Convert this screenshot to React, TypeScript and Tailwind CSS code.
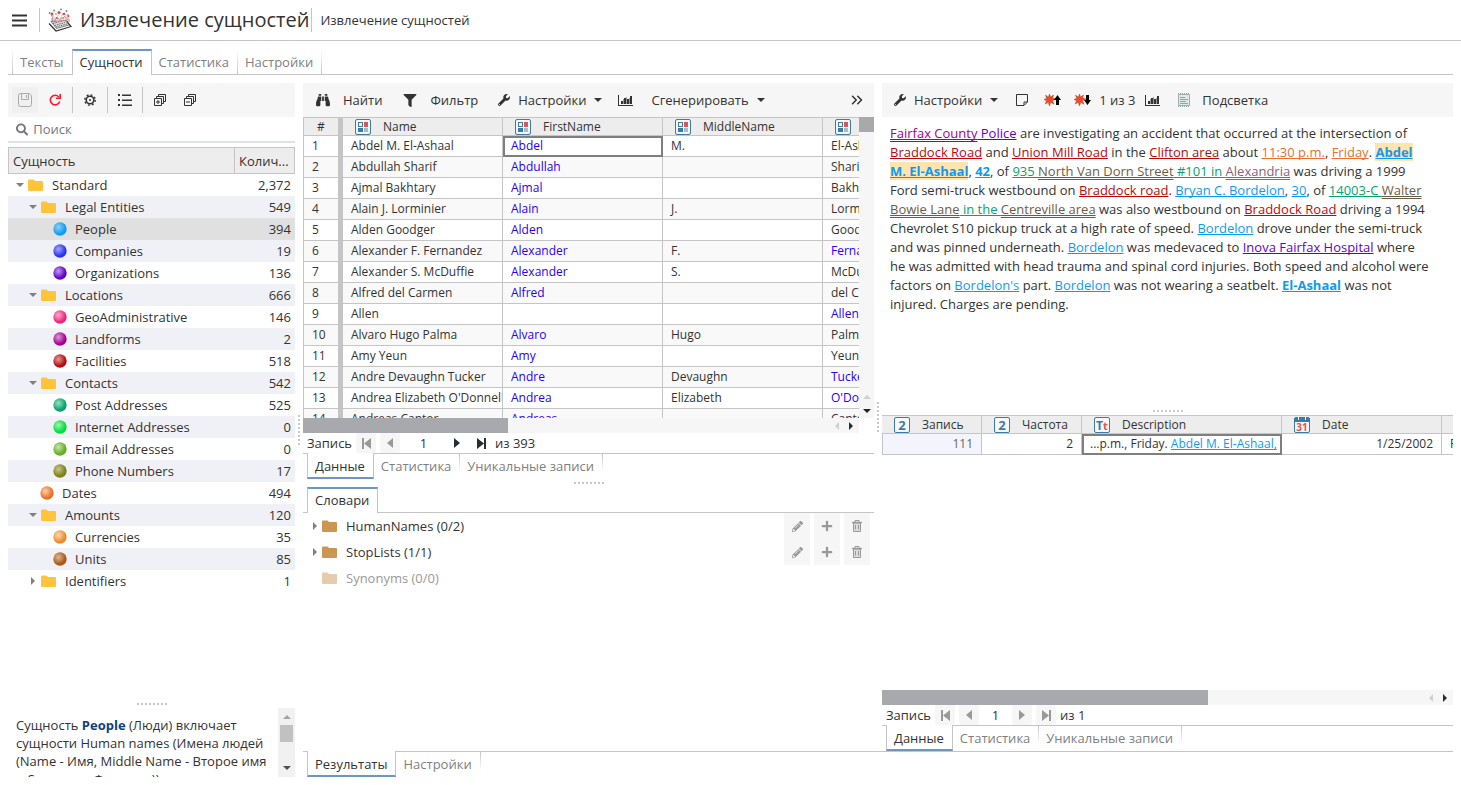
import React, { useId, useState } from 'react';
import { FaBinoculars, FaFilter, FaWrench, FaSearch, FaPencilAlt, FaPlus } from 'react-icons/fa';
import { ChevronsRight } from 'lucide-react';

type Ball = [string, string];

interface TreeNode {
  level: 0 | 1 | 2;
  label: string;
  count: string;
  ball?: Ball;
  closed?: boolean;
}

const tree: TreeNode[] = [
  { level: 0, label: 'Standard', count: '2,372' },
  { level: 1, label: 'Legal Entities', count: '549' },
  { level: 2, label: 'People', count: '394', ball: ['#8fd0f5', '#109cf0'] },
  { level: 2, label: 'Companies', count: '19', ball: ['#a3a8ff', '#2a33f0'] },
  { level: 2, label: 'Organizations', count: '136', ball: ['#c39bf0', '#6200cc'] },
  { level: 1, label: 'Locations', count: '666' },
  { level: 2, label: 'GeoAdministrative', count: '146', ball: ['#ffb0cf', '#f02378'] },
  { level: 2, label: 'Landforms', count: '2', ball: ['#e09ad6', '#a40090'] },
  { level: 2, label: 'Facilities', count: '518', ball: ['#e59a9a', '#b80a0e'] },
  { level: 1, label: 'Contacts', count: '542' },
  { level: 2, label: 'Post Addresses', count: '525', ball: ['#98dfc4', '#08a26c'] },
  { level: 2, label: 'Internet Addresses', count: '0', ball: ['#9cf7b0', '#04dd3c'] },
  { level: 2, label: 'Email Addresses', count: '0', ball: ['#c5e8a5', '#64ad28'] },
  { level: 2, label: 'Phone Numbers', count: '17', ball: ['#c9c98a', '#7d801c'] },
  { level: 1, label: 'Dates', count: '494', ball: ['#ffd0b0', '#e8702a'] },
  { level: 1, label: 'Amounts', count: '120' },
  { level: 2, label: 'Currencies', count: '35', ball: ['#ffdcb0', '#ea8a2a'] },
  { level: 2, label: 'Units', count: '85', ball: ['#dfb894', '#a8581a'] },
  { level: 1, label: 'Identifiers', count: '1', closed: true },
];

const indent = { 0: 'pl-[6px]', 1: 'pl-[19px]', 2: 'pl-[32px]' };

// last name is shown in blue when the extractor recognised it
const people: [string, string, string, string, boolean][] = [
  ['Abdel M. El-Ashaal', 'Abdel', 'M.', 'El-Ashaal', false],
  ['Abdullah Sharif', 'Abdullah', '', 'Sharif', false],
  ['Ajmal Bakhtary', 'Ajmal', '', 'Bakhtary', false],
  ['Alain J. Lorminier', 'Alain', 'J.', 'Lorminier', false],
  ['Alden Goodger', 'Alden', '', 'Goodger', false],
  ['Alexander F. Fernandez', 'Alexander', 'F.', 'Fernandez', true],
  ['Alexander S. McDuffie', 'Alexander', 'S.', 'McDuffie', false],
  ['Alfred del Carmen', 'Alfred', '', 'del Carmen', false],
  ['Allen', '', '', 'Allen', true],
  ['Alvaro Hugo Palma', 'Alvaro', 'Hugo', 'Palma', false],
  ['Amy Yeun', 'Amy', '', 'Yeun', false],
  ['Andre Devaughn Tucker', 'Andre', 'Devaughn', 'Tucker', true],
  ["Andrea Elizabeth O'Donnell", 'Andrea', 'Elizabeth', "O'Donnell", true],
  ['Andreas Cantor', 'Andreas', '', 'Cantor', false],
];

const dictionaries = [
  { name: 'HumanNames (0/2)', empty: false },
  { name: 'StopLists (1/1)', empty: false },
  { name: 'Synonyms (0/0)', empty: true },
];

function Arrow({ dir, className = '' }: { dir: 'up' | 'down' | 'left' | 'right'; className?: string }) {
  const d = {
    up: 'M0 6 L4 2 L8 6Z',
    down: 'M0 2 L8 2 L4 6Z',
    left: 'M6 0 L6 8 L2 4Z',
    right: 'M2 0 L6 4 L2 8Z',
  };
  return (
    <svg viewBox="0 0 8 8" className={`w-2 h-2 shrink-0 ${className}`} fill="currentColor">
      <path d={d[dir]} />
    </svg>
  );
}

function Folder({ className }: { className: string }) {
  return (
    <svg viewBox="0 0 15 12" className={`h-3 w-[15px] shrink-0 ${className}`} fill="currentColor">
      <path d="M0 1.5Q0 .5 1 .5H5.2Q6 .5 6.4 1.2L7 2H14Q15 2 15 3V11Q15 12 14 12H1Q0 12 0 11Z" />
    </svg>
  );
}

function BallIcon({ id, colors }: { id: string; colors: Ball }) {
  return (
    <svg viewBox="0 0 14 14" className="w-[14px] h-[14px] shrink-0">
      <defs>
        <radialGradient id={id} cx="0.38" cy="0.36" r="0.62">
          <stop offset="0" stopColor={colors[0]} />
          <stop offset="0.85" stopColor={colors[1]} />
        </radialGradient>
      </defs>
      <circle cx="7" cy="7" r="6.7" fill={`url(#${id})`} />
    </svg>
  );
}

function Logo() {
  return (
    <svg viewBox="0 0 24 24" className="w-6 h-6 shrink-0" fill="none">
      <path d="M1 15.5L8 23L23 18.5L18.5 13" stroke="#333" strokeWidth="1.2" />
      <path d="M3 13.5L8.5 20.5L21 17L17.5 12.5Z" fill="#ddd" stroke="#555" strokeWidth="0.7" />
      <path d="M5 15.5L14 13M6.5 17.5L17 14.5M8 19L19 16" stroke="#444" strokeWidth="0.8" strokeDasharray="1.5 1" />
      <path d="M9 14Q6 9 4 6M10 14Q9 7 11 5M12 14Q13 8 15 5M14 13Q17 10 20 6" stroke="#f0a3a3" strokeWidth="0.8" />
      <path d="M3 6Q6 11 5 14M20 6Q21 11 18 14M8 9Q12 14 17 8" stroke="#b77" strokeWidth="0.8" />
      <path d="M4 14V10M7 14V11M18 13V9M21 14V11" stroke="#777" strokeWidth="0.8" />
      <g fill="#e24848">
        <circle cx="4" cy="6" r="1.4" /><circle cx="11" cy="4.5" r="1.6" /><circle cx="16" cy="6" r="1.3" />
        <circle cx="20.5" cy="8" r="1" /><circle cx="8.5" cy="10" r="1" />
      </g>
      <g fill="#4f9a5c">
        <circle cx="6" cy="2.5" r="0.9" /><circle cx="13" cy="1.4" r="0.9" /><circle cx="18.5" cy="3" r="0.9" />
        <circle cx="1.6" cy="5" r="0.9" /><circle cx="8" cy="6" r="0.8" /><circle cx="15" cy="10" r="0.8" />
      </g>
    </svg>
  );
}

function ChartIcon() {
  return (
    <svg viewBox="0 0 15 12" className="w-[15px] h-3 shrink-0" fill="#333">
      <path d="M0 1H1V11H15V12H0ZM3 7H5V10H3ZM6 4H8V10H6ZM9 5H11V10H9ZM12 2H14V10H12Z" />
      <path d="M5 5H6V10H5ZM8 3H9V10H8ZM11 4H12V10H11Z" fill="#999" />
    </svg>
  );
}

function StackIcon({ plus }: { plus?: boolean }) {
  return (
    <svg viewBox="0 0 12 12" className="w-3 h-3" fill="none" stroke="#333">
      <path d="M0.5 4.5H7.5V11.5H0.5ZM2.5 4V2.5H9.5V9.5H8M4.5 2V0.5H11.5V7.5H10" />
      <path d={plus ? 'M2 8H6M4 6V10' : 'M2 8H6'} />
    </svg>
  );
}

function BurstIcon({ down }: { down?: boolean }) {
  return (
    <svg viewBox="0 0 17 12" className="w-[17px] h-3">
      <path
        d="M5.5 0L6.5 3L9.5 1L8.5 4L12 5L8.5 6.8L10 10.2L6.7 8.3L5.5 12L4.3 8.3L1.2 10L2.6 6.8L0 5.5L2.8 4.2L1.5 1.2L4.5 3Z"
        fill="#ee4b2b"
        stroke="#b93a20"
        strokeWidth="0.5"
      />
      <path d={down ? 'M12 1H15V6H17L13.5 11L10 6H12Z' : 'M12 11H15V6H17L13.5 1L10 6H12Z'} fill="#000" />
    </svg>
  );
}

function TypeIcon({ kind }: { kind: 'category' | 'number' | 'text' | 'date' }) {
  return (
    <svg viewBox="0 0 16 16" className="w-4 h-4 shrink-0">
      <rect x="0.5" y="0.5" width="15" height="15" rx="1.5" fill="#f7f7f7" stroke="#3a7ba8" />
      {kind === 'category' && (
        <>
          <rect x="3.5" y="3.5" width="4" height="4" fill="#fff" stroke="#3a7ba8" />
          <rect x="9" y="3" width="4" height="5" fill="#e2544f" />
          <rect x="3" y="9" width="5" height="4" fill="#3a7ba8" />
          <rect x="9" y="9" width="4" height="4" fill="#a3bdd0" />
        </>
      )}
      {kind === 'number' && (
        <text x="8" y="13" textAnchor="middle" fontSize="13" fontWeight="700" fill="#3a7ba8">2</text>
      )}
      {kind === 'text' && (
        <>
          <text x="2" y="13" fontSize="12" fontWeight="700" fill="#3a7ba8">T</text>
          <text x="9" y="13" fontSize="11" fontWeight="700" fill="#e2544f">t</text>
        </>
      )}
      {kind === 'date' && (
        <>
          <rect x="0" y="1" width="16" height="4" fill="#3a7ba8" />
          <path d="M4.5 0V3M11.5 0V3" stroke="#fff" />
          <text x="8" y="14" textAnchor="middle" fontSize="10" fontWeight="700" fill="#e2544f">31</text>
        </>
      )}
    </svg>
  );
}

function TrashIcon() {
  return (
    <svg viewBox="0 0 12 12" className="w-3 h-3" fill="none" stroke="currentColor">
      <path d="M2.5 3H9.5V11.5H2.5Z" fill="#ddd" />
      <path d="M1 2.5H11" strokeWidth="1.4" />
      <path d="M4 2V0.5H8V2M4.5 5V9.5M7.5 5V9.5" />
    </svg>
  );
}

function Dots({ vertical }: { vertical?: boolean }) {
  return (
    <div className={`flex items-center justify-center shrink-0 ${vertical ? 'w-2' : 'h-2'}`}>
      <div className={`flex gap-[2px] ${vertical ? 'flex-col' : ''}`}>
        {Array.from({ length: 8 }, (_, i) => (
          <span key={i} className="w-[2px] h-[2px] bg-[#c8c8c8]" />
        ))}
      </div>
    </div>
  );
}

function Tabs({ items, bottom, first = 0 }: { items: string[]; bottom?: boolean; first?: number }) {
  const [active, setActive] = useState(first);
  const fade = bottom ? 'bg-linear-to-b from-[#c5c5c5] to-white' : 'bg-linear-to-t from-[#c5c5c5] to-white';
  return (
    <div className={`flex h-[26px] shrink-0 pl-1 border-[#c5c5c5] ${bottom ? 'border-t' : 'border-b'}`}>
      {active > 0 && <span className={`w-px ${fade}`} />}
      {items.map((item, i) => (
        <React.Fragment key={item}>
          <button
            onClick={() => setActive(i)}
            className={
              i !== active
                ? `pl-[7px] pr-2 text-[#808080] ${bottom ? 'pb-px' : 'pt-px'}`
                : bottom
                  ? '-mt-px pt-[2px] pl-[7px] pr-2 bg-white border-x border-x-[#c5c5c5] border-b-2 border-b-[#6c96c6]'
                  : '-mb-px pb-[2px] pl-[7px] pr-2 bg-white border-x border-x-[#c5c5c5] border-t-2 border-t-[#6c96c6]'
            }
          >
            {item}
          </button>
          {i !== active && i + 1 !== active && <span className={`w-px ${fade} ${bottom ? 'h-[18px]' : ''}`} />}
        </React.Fragment>
      ))}
    </div>
  );
}

function Pager({ total, wide }: { total: string; wide?: boolean }) {
  const id = useId();
  const off = 'bg-[#f6f6f6] text-[#999]';
  const on = 'text-[#222d35]';
  const box = 'flex items-center justify-center w-5 h-5 rounded-xs';
  return (
    <div className="flex items-center h-5 shrink-0 pl-1">
      <label htmlFor={id} className="w-[49px]">Запись</label>
      <button aria-label="Первая" className={`${box} ${off}`}>
        <svg viewBox="0 0 9 11" className="w-[9px] h-[11px]" fill="currentColor"><path d="M0 0H2V11H0ZM9 0V11L2 5.5Z" /></svg>
      </button>
      <button aria-label="Предыдущая" className={`${box} ${off} ml-1`}>
        <svg viewBox="0 0 6 10" className="w-[6px] h-[10px]" fill="currentColor"><path d="M6 0V10L0 5Z" /></svg>
      </button>
      <input id={id} defaultValue="1" className={`text-center outline-none ${wide ? 'w-[47px]' : 'w-[33px]'}`} />
      <button aria-label="Следующая" className={`${box} ${wide ? on : off}`}>
        <svg viewBox="0 0 6 10" className="w-[6px] h-[10px]" fill="currentColor"><path d="M0 0V10L6 5Z" /></svg>
      </button>
      <button aria-label="Последняя" className={`${box} ${wide ? on : off} ml-1`}>
        <svg viewBox="0 0 9 11" className="w-[9px] h-[11px]" fill="currentColor"><path d="M7 0H9V11H7ZM0 0V11L7 5.5Z" /></svg>
      </button>
      <span className="ml-1">{total}</span>
    </div>
  );
}

function HeadCell({ kind, children }: { kind: 'category' | 'number' | 'text' | 'date'; children?: React.ReactNode }) {
  return (
    <th className="p-0 font-normal border-y border-r border-[#c5c5c5] bg-[#ededed]">
      <span className="flex items-center h-[17px] pl-3 gap-3 overflow-hidden whitespace-nowrap leading-4">
        <TypeIcon kind={kind} />
        {children}
      </span>
    </th>
  );
}

const Separator = () => <span className="w-px h-[26px] bg-[#c5c5c5]" />;

function EntitiesPanel() {
  const tool = 'flex items-center justify-center w-[26px] h-[26px] rounded-xs';
  return (
    <aside className="flex flex-col w-[287px] shrink-0 min-h-0">
      <div className="flex items-center gap-1 h-[34px] pl-1 bg-[#f6f6f6] shrink-0">
        <button aria-label="Сохранить" className={`${tool} bg-[#f0f0f0]`}>
          <svg viewBox="0 0 14 14" className="w-[14px] h-[14px]" fill="none" stroke="#aaa">
            <path d="M2.5 .5H11.5L13.5 2.5V11.5Q13.5 13.5 11.5 13.5H2.5Q.5 13.5 .5 11.5V2.5Q.5 .5 2.5 .5ZM3.5 .5V6.5H10.5V.5M8.5 2V5" />
          </svg>
        </button>
        <button aria-label="Обновить" className={tool}>
          <svg viewBox="0 0 12 12" className="w-3 h-3" fill="none" stroke="#fb1c2c" strokeWidth="1.6">
            <path d="M9.8 3A4.8 4.8 0 1 0 10.7 7.6M11.2 0V4.2H7" />
          </svg>
        </button>
        <Separator />
        <button aria-label="Настройки" className={tool}>
          <svg viewBox="0 0 12 12" className="w-3 h-3" fill="none" stroke="#333">
            <circle cx="6" cy="6" r="3.8" strokeWidth="1.6" />
            <circle cx="6" cy="6" r="5.2" strokeWidth="1.4" strokeDasharray="1.9 2.18" />
            <circle cx="6" cy="6" r="1" fill="#333" stroke="none" />
          </svg>
        </button>
        <Separator />
        <button aria-label="Список" className={tool}>
          <svg viewBox="0 0 14 12" className="w-[14px] h-3" fill="#333">
            <path d="M0 0H2V2H0ZM4 0.5H13V2H4ZM0 5H2V7H0ZM4 5.5H14V7H4ZM0 10H2V12H0ZM4 10.5H14V12H4Z" />
          </svg>
        </button>
        <Separator />
        <button aria-label="Развернуть" className={tool}><StackIcon plus /></button>
        <button aria-label="Свернуть" className={tool}><StackIcon /></button>
      </div>

      <label className="flex items-center gap-[5px] h-[26px] pl-2 mb-1 border-b-2 border-[#dfe3e8] shrink-0">
        <FaSearch className="w-[13px] h-[13px] text-[#777]" />
        <input type="search" placeholder="Поиск" className="w-full outline-none placeholder:text-[#777]" />
      </label>

      <div className="flex-1 min-h-0 overflow-hidden">
        <table className="w-full table-fixed border-separate border-spacing-0">
          <colgroup>
            <col />
            <col className="w-[61px]" />
          </colgroup>
          <thead>
            <tr className="h-[27px] bg-[#ededed] text-left">
              <th className="py-0 px-1 font-normal border-y border-l border-[#c5c5c5]">Сущность</th>
              <th className="py-0 px-1 font-normal border border-[#c5c5c5]">Колич...</th>
            </tr>
          </thead>
          <tbody>
            {tree.map((node, i) => (
              <tr
                key={node.label}
                className={`h-[22px] ${node.label === 'People' ? 'bg-[#e0e0e0]' : i % 2 ? 'bg-[#f0f1f7]' : ''}`}
              >
                <td className="p-0">
                  <span className={`flex items-center ${indent[node.level]}`}>
                    {node.ball ? (
                      <span className="flex pl-[13px] pr-2">
                        <BallIcon id={`ball-${i}`} colors={node.ball} />
                      </span>
                    ) : (
                      <>
                        <Arrow dir={node.closed ? 'right' : 'down'} className="ml-[2px] mr-1 text-[#808080]" />
                        <Folder className="mr-[9px] text-[#ffc439]" />
                      </>
                    )}
                    {node.label}
                  </span>
                </td>
                <td className="p-0 pr-1 text-right">{node.count}</td>
              </tr>
            ))}
          </tbody>
        </table>
      </div>

      <Dots />

      <div className="flex h-[69px] shrink-0 overflow-hidden">
        <p className="flex-1 pt-2 pl-2 leading-[18px]">
          Сущность <b className="text-[#0f3f7f]">People</b> (Люди) включает сущности Human names (Имена людей (Name -
          Имя, Middle Name - Второе имя и Surname - Фамилия)).
        </p>
        <div className="flex flex-col items-center w-[17px] bg-[#f1f1f1] py-[5px]">
          <Arrow dir="up" className="text-[#a3a3a3]" />
          <span className="mt-1 w-[13px] h-[17px] bg-[#c1c1c1]" />
          <Arrow dir="down" className="mt-auto text-[#505050]" />
        </div>
      </div>
    </aside>
  );
}

function PeopleGrid() {
  const cell = 'p-0 pl-2 border-b border-r border-[#c5c5c5] overflow-hidden whitespace-nowrap';
  return (
    <div className="flex flex-col flex-1 min-h-0">
      <div className="flex flex-1 min-h-0">
        <div className="flex-1 min-w-0 overflow-hidden">
          <table className="w-[680px] table-fixed border-separate border-spacing-0 text-[12px] leading-4">
            <colgroup>
              <col className="w-[40px]" />
              <col className="w-[160px]" />
              <col className="w-[160px]" />
              <col className="w-[160px]" />
              <col className="w-[160px]" />
            </colgroup>
            <thead>
              <tr className="h-[19px] bg-[#ededed]">
                <th className="p-0 font-normal border-y border-l border-r-[5px] border-[#c5c5c5]">#</th>
                <HeadCell kind="category">Name</HeadCell>
                <HeadCell kind="category">FirstName</HeadCell>
                <HeadCell kind="category">MiddleName</HeadCell>
                <HeadCell kind="category">LastName</HeadCell>
              </tr>
            </thead>
            <tbody>
              {people.map(([name, firstName, middle, last, known], i) => (
                <tr key={name} className={`h-[21px] ${i % 2 ? 'bg-[#f9f9f9]' : 'bg-white'}`}>
                  <td className="p-0 pl-2 border-b border-l border-r-[5px] border-[#c5c5c5]">{i + 1}</td>
                  <td className={cell}>{name}</td>
                  <td className={`${cell} text-[#2a00f0] ${i === 0 ? 'outline-2 -outline-offset-2 outline-[#7f7f7f]' : ''}`}>
                    {firstName}
                  </td>
                  <td className={cell}>{middle}</td>
                  <td className={`${cell} ${known ? 'text-[#2a00f0]' : ''}`}>{last}</td>
                </tr>
              ))}
            </tbody>
          </table>
        </div>
        <div className="flex flex-col items-center w-[15px] bg-[#f6f6f6]">
          <span className="w-full h-[15px] bg-[#a8a9ad]" />
          <Arrow dir="up" className="mt-auto text-[#d0d0d0]" />
          <Arrow dir="down" className="mt-[6px] mb-[3px] text-[#222]" />
        </div>
      </div>
      <div className="flex items-center justify-end gap-[6px] h-[15px] mr-[15px] pr-1 bg-[#f6f6f6] shrink-0">
        <span className="mr-auto w-[205px] h-full bg-[#a8a9ad]" />
        <Arrow dir="left" className="text-[#d0d0d0]" />
        <Arrow dir="right" className="text-[#222d35]" />
      </div>
    </div>
  );
}

function MiddlePanel() {
  return (
    <section className="flex flex-col flex-1 min-w-0">
      <div className="flex flex-col flex-[3] min-h-0">
        <div className="flex items-center h-[34px] pl-3 pr-3 bg-[#f6f6f6] shrink-0">
          <button className="flex items-center gap-3"><FaBinoculars className="w-4 h-[14px]" />Найти</button>
          <button className="flex items-center gap-3 ml-5"><FaFilter className="w-4 h-[13px]" />Фильтр</button>
          <button className="flex items-center gap-2 ml-5">
            <FaWrench className="w-3 h-3" />Настройки<Arrow dir="down" />
          </button>
          <button aria-label="Диаграмма" className="ml-4"><ChartIcon /></button>
          <button className="flex items-center gap-2 ml-[18px]">Сгенерировать<Arrow dir="down" /></button>
          <button aria-label="Ещё" className="ml-auto -mr-1"><ChevronsRight className="w-[18px] h-[18px]" /></button>
        </div>
        <PeopleGrid />
        <Pager wide total="из 393" />
        <Tabs bottom items={['Данные', 'Статистика', 'Уникальные записи']} />
      </div>
      <Dots />
      <div className="flex flex-col flex-[2] min-h-0">
        <Tabs items={['Словари']} />
        <ul>
          {dictionaries.map(({ name, empty }) => (
            <li key={name} className={`flex items-center h-[26px] pl-2 pr-1 ${empty ? 'text-[#999]' : ''}`}>
              <Arrow dir="right" className={empty ? 'invisible' : 'text-[#808080]'} />
              <Folder className={`ml-[3px] mr-[9px] ${empty ? 'text-[#e5ccaa]' : 'text-[#cb9651]'}`} />
              <span className="flex-1">{name}</span>
              {!empty && (
                <span className="flex gap-1 text-[#999]">
                  <button aria-label="Изменить" className="flex items-center justify-center w-[26px] h-[26px] bg-[#f6f6f6]">
                    <FaPencilAlt className="w-[11px] h-[11px]" />
                  </button>
                  <button aria-label="Добавить" className="flex items-center justify-center w-[26px] h-[26px] bg-[#f6f6f6]">
                    <FaPlus className="w-3 h-3" />
                  </button>
                  <button aria-label="Удалить" className="flex items-center justify-center w-[26px] h-[26px] bg-[#f6f6f6]">
                    <TrashIcon />
                  </button>
                </span>
              )}
            </li>
          ))}
        </ul>
      </div>
    </section>
  );
}

function E({ c, double, children }: { c: string; double?: boolean; children: React.ReactNode }) {
  return (
    <a
      href="#"
      className={`underline [text-decoration-skip-ink:none] ${double ? 'decoration-double' : ''} ${c}`}
    >
      {children}
    </a>
  );
}

const person = 'text-[#0f9af0]';
const facility = 'text-[#b80a0e]';
const address = 'text-[#08a26c]';
const geo = 'text-[#6b5d45]';
const date = 'text-[#e8702a]';
const org = 'text-[#6200cc]';

function DocumentText() {
  return (
    <p className="pl-2 pr-[23px] pt-[7px] leading-[19px]">
      <E double c="text-[#a40090]">Fairfax County</E><E c={org}> Police</E> are investigating an accident that
      occurred at the intersection of <E c={facility}>Braddock Road</E> and <E c={facility}>Union Mill Road</E> in the{' '}
      <E c={facility}>Clifton area</E> about <E c={date}>11:30 p.m.</E>, <E c={date}>Friday</E>.{' '}
      <b className="bg-[#ffe4ae]"><E c={person}>Abdel M. El-Ashaal</E></b>, <b><E c={person}>42</E></b>, of{' '}
      <E c={address}>935 </E><E double c={geo}>North Van Dorn Street</E><E c={address}> #101 in </E>
      <E double c="text-[#86627c]">Alexandria</E> was driving a 1999 Ford semi-truck westbound on{' '}
      <E c={facility}>Braddock road</E>. <E c={person}>Bryan C. Bordelon</E>, <E c={person}>30</E>, of{' '}
      <E c={address}>14003-C </E><E double c={geo}>Walter Bowie Lane</E><E c={address}> in the </E>
      <E double c={geo}>Centreville area</E> was also westbound on <E c={facility}>Braddock Road</E> driving a 1994
      Chevrolet S10 pickup truck at a high rate of speed. <E c={person}>Bordelon</E> drove under the semi-truck and was
      pinned underneath. <E c={person}>Bordelon</E> was medevaced to <E c={org}>Inova Fairfax Hospital</E> where he was
      admitted with head trauma and spinal cord injuries. Both speed and alcohol were factors on{' '}
      <E c={person}>Bordelon's</E> part. <E c={person}>Bordelon</E> was not wearing a seatbelt.{' '}
      <b><E c={person}>El-Ashaal</E></b> was not injured. Charges are pending.
    </p>
  );
}

function RightPanel() {
  const cell = 'p-0 px-2 border-b border-r border-[#c5c5c5] overflow-hidden whitespace-nowrap';
  return (
    <section className="flex flex-col flex-1 min-w-0">
      <div className="flex flex-col flex-[27] min-h-0">
        <div className="flex items-center h-[34px] pl-3 bg-[#f6f6f6] shrink-0">
          <button className="flex items-center gap-2"><FaWrench className="w-3 h-3" />Настройки<Arrow dir="down" /></button>
          <button aria-label="Заметка" className="ml-[18px]">
            <svg viewBox="0 0 12 12" className="w-3 h-3" fill="none" stroke="#333">
              <path d="M.5 .5H11.5V8L8 11.5H.5ZM8 11V8H11" />
            </svg>
          </button>
          <button aria-label="Предыдущее" className="ml-4"><BurstIcon /></button>
          <button aria-label="Следующее" className="ml-[13px]"><BurstIcon down /></button>
          <span className="ml-2">1 из 3</span>
          <button aria-label="Диаграмма" className="ml-[10px]"><ChartIcon /></button>
          <button className="flex items-center gap-3 ml-[18px]">
            <svg viewBox="0 0 12 14" className="w-3 h-[14px]" fill="none">
              <path d="M.5 1.5H11.5V12.5H.5Z" fill="#dfe9e7" stroke="#9ab0ae" />
              <path d="M0 .5H12M0 13.5H12" stroke="#8fa5a3" strokeDasharray="1 1" />
              <path d="M2 4.5H7M2 6.5H10M2 8.5H8M2 10.5H10" stroke="#8ba5a8" />
            </svg>
            Подсветка
          </button>
        </div>
        <DocumentText />
      </div>
      <Dots />
      <div className="flex flex-col flex-[28] min-h-0">
        <div className="flex-1 min-h-0 overflow-hidden">
          <table className="w-[720px] table-fixed border-separate border-spacing-0 text-[12px] leading-4">
            <colgroup>
              <col className="w-[100px]" />
              <col className="w-[100px]" />
              <col className="w-[200px]" />
              <col className="w-[160px]" />
              <col className="w-[160px]" />
            </colgroup>
            <thead>
              <tr className="h-[19px]">
                <HeadCell kind="number">Запись</HeadCell>
                <HeadCell kind="number">Частота</HeadCell>
                <HeadCell kind="text">Description</HeadCell>
                <HeadCell kind="date">Date</HeadCell>
                <HeadCell kind="category">Place</HeadCell>
              </tr>
            </thead>
            <tbody>
              <tr className="h-[21px]">
                <td className={`${cell} border-l bg-[#f4f4fe] text-[#666] text-right`}>111</td>
                <td className={`${cell} text-right`}>2</td>
                <td className={`${cell} outline-2 -outline-offset-2 outline-[#7f7f7f]`}>
                  ...p.m., Friday. <E c={person}>Abdel M. El-Ashaal,</E>
                </td>
                <td className={`${cell} text-right`}>1/25/2002</td>
                <td className={cell}>Fairfax</td>
              </tr>
            </tbody>
          </table>
        </div>
        <div className="flex items-center gap-[6px] h-[15px] pr-1 bg-[#f6f6f6] shrink-0">
          <span className="mr-auto w-[326px] h-full bg-[#a8a9ad]" />
          <Arrow dir="left" className="text-[#d0d0d0]" />
          <Arrow dir="right" className="text-[#222d35]" />
        </div>
        <Pager total="из 1" />
        <Tabs bottom items={['Данные', 'Статистика', 'Уникальные записи']} />
      </div>
    </section>
  );
}

export default function App() {
  return (
    <div className="flex flex-col h-screen overflow-hidden bg-white text-[#333] text-[13px] leading-[18px] font-['Open_Sans',sans-serif]">
      <header className="flex items-center h-[41px] shrink-0 pl-3 border-b border-[#c5c5c5]">
        <button aria-label="Меню" className="mr-3">
          <svg viewBox="0 0 15 13" className="w-[15px] h-[13px]" fill="#333">
            <path d="M0 .5H15V2.5H0ZM0 5.5H15V7.5H0ZM0 10.5H15V12.5H0Z" />
          </svg>
        </button>
        <span className="w-px h-6 mr-2 bg-[#c5c5c5]" />
        <Logo />
        <h1 className="ml-2 mr-[2px] text-[20px] leading-6">Извлечение сущностей</h1>
        <span className="w-px h-6 mr-2 bg-[#c5c5c5]" />
        <span>Извлечение сущностей</span>
      </header>

      <main className="flex flex-col flex-1 min-h-0 p-2">
        <Tabs first={1} items={['Тексты', 'Сущности', 'Статистика', 'Настройки']} />
        <div className="flex flex-1 min-h-0 mt-2">
          <EntitiesPanel />
          <Dots vertical />
          <div className="flex flex-col flex-1 min-w-0">
            <div className="flex flex-1 min-h-0">
              <MiddlePanel />
              <Dots vertical />
              <RightPanel />
            </div>
            <Tabs bottom items={['Результаты', 'Настройки']} />
          </div>
        </div>
      </main>
    </div>
  );
}
